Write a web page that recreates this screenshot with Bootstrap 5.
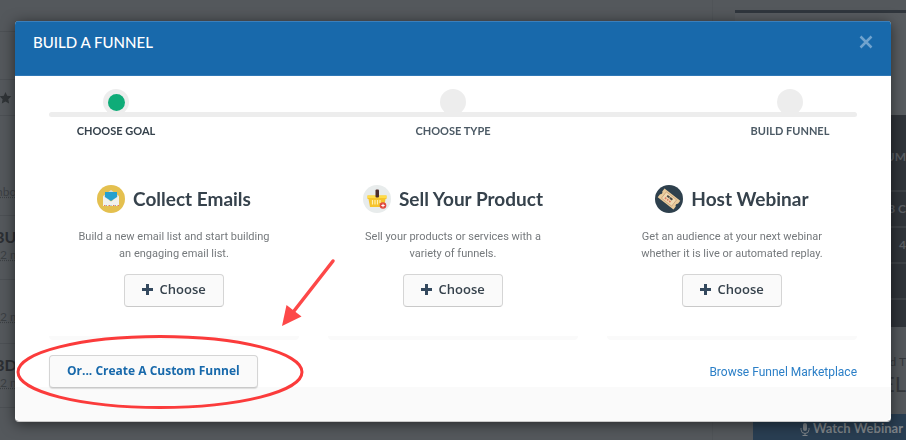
<!DOCTYPE html>
<html lang="en">
<head>
<meta charset="utf-8">
<meta name="viewport" content="width=device-width, initial-scale=1">
<title>Build a Funnel</title>
<link href="https://cdn.jsdelivr.net/npm/bootstrap@5.3.0/dist/css/bootstrap.min.css" rel="stylesheet">
<style>
body { font-family: Lato, "Open Sans", sans-serif; background: #54585c; color: #36393d; overflow: hidden; }
.backdrop-page { height: 100vh; overflow: hidden; }
.feed { border-right: 1px solid #505458; }
.feed-row { border-bottom: 1px solid #4c5054; height: 64px; padding-top: 12px; font-size: 12px; line-height: 18px; white-space: nowrap; color: #3c4044; }
.feed-row strong { font-size: 16px; color: #2c2f33; display: block; margin-left: -6px; }
.feed-row span { text-decoration: underline dotted; }
.feed-top { height: 32px; }
.feed-tool { height: 32px; padding-top: 0; }
.feed-star { height: 36px; }
.feed-label { height: 100px; padding-top: 67px; }
.feed-label span { margin-left: -4px; }
.aside-col { width: 171px; padding-top: 10px; margin-left: 22px; }
.aside-card { border-top: 3px solid #30363d; background: #585c60; height: 105px; }
.stat { background: #30343a; color: #595d62; border-bottom: 2px solid #3d4146; height: 36px; line-height: 34px; font-size: 12px; font-weight: 700; text-align: right; white-space: nowrap; }
.stat-head { height: 77px; line-height: 84px; }
.stat-last { height: 27px; border: 0; }
.trial { height: 86px; margin-top: 1px; color: #36393d; font-size: 12px; text-align: right; padding-top: 24px; line-height: 20px; }
.trial b { font-size: 22px; font-weight: 400; display: block; line-height: 24px; }
.btn-watch { --bs-btn-color: #7d8388; --bs-btn-bg: #293e52; --bs-btn-border-color: #293e52; --bs-btn-hover-bg: #293e52; width: 153px; margin-left: 18px; height: 36px; padding: 0 2px 8px; font-size: 13px; line-height: 22px; font-weight: 700; text-align: right; white-space: nowrap; }

.modal-dialog { max-width: none; margin: 21px 15px; }
.modal-content { border: 0; border-radius: 4px; overflow: hidden; box-shadow: 0 2px 14px rgba(0,0,0,.55); border-bottom: 1px solid #c9c9c9; color: #36424c; }
.modal-header { background: #1869ab; border: 0; border-top: 1px solid #3b7fbb; border-bottom: 1px solid #2f78b6; border-radius: 0; padding: 10px 18px 23px; }
.modal-title { color: #fff; font-size: 15px; line-height: 20px; font-weight: 500; }
.close-x { color: #70a3ce; line-height: 0; }
.modal-body { padding: 13px 34px 0; }
.step-row { font-size: 11px; line-height: 14px; font-weight: 700; color: #4c5a65; padding-top: 7px; }
.step { width: 134px; }
.step-current { color: #36424c; }
.step-dot { width: 26px; height: 26px; border-radius: 50%; background: #ededed; padding: 5px; }
.step-dot i { display: block; width: 17px; height: 17px; border-radius: 50%; background: #0fac78; }
.step-line { height: 5px; margin-top: -3px; border-radius: 3px; background: #ededed; position: relative; }
.goal-row { --bs-gutter-x: 29px; padding-top: 47px; }
.goal { padding-bottom: 29px; border-bottom: 4px solid #fafafa; border-radius: 4px; }
.goal h2 { font-size: 19px; line-height: 28px; font-weight: 700; gap: 8px; margin: 0 0 15px; }
.goal p { font-family: Roboto, sans-serif; font-size: 11px; line-height: 17px; color: #75797c; margin: 0 0 12px; }
.btn-goal { --bs-btn-color: #36424c; --bs-btn-bg: #fafafa; --bs-btn-border-color: #d5d5d5; --bs-btn-hover-bg: #f1f1f1; --bs-btn-hover-color: #36424c; --bs-btn-border-radius: 4px; border-bottom-color: #c9c9c9; font-family: "Open Sans", sans-serif; font-weight: 600; font-size: 13px; line-height: 19px; padding: 5px 17px 7px; height: 33px; }
.btn-goal svg { margin: 0 3px 2px 0; }
.btn-custom { --bs-btn-color: #1869ab; --bs-btn-hover-color: #1869ab; font-size: 12px; font-weight: 700; box-shadow: 0 1px 1px rgba(0,0,0,.12); }
.action-row { padding-top: 15px; }
.market { color: #2b7fc7; font-family: Roboto, sans-serif; font-size: 12px; text-decoration: none; }
.modal-footer { background: #fafafa; border: 0; height: 34px; margin-top: -1px; }
.marks { position: absolute; left: 0; top: 0; z-index: 1060; pointer-events: none; }
</style>
<script src="https://cdn.jsdelivr.net/npm/bootstrap@5.3.0/dist/js/bootstrap.bundle.min.js"></script>
</head>
<body>
<div class="backdrop-page d-flex" aria-hidden="true">
  <div class="feed flex-grow-1">
    <div class="feed-row feed-top p-0"></div>
    <div class="feed-row feed-tool mt-3"></div>
    <div class="feed-row feed-star p-0 d-flex align-items-center">
      <svg width="12" height="12" viewBox="0 0 12 12"><path fill="#303437" d="M5.500 0.000l1.700 3.800 4.100.5-3 2.900.8 4.200-3.600-2-3.700 2 .8-4.200-3-2.900 4.200-.5z"/></svg>
    </div>
    <div class="feed-row feed-label"><span>nbox</span></div>
    <div class="feed-row"><strong>BU</strong><span>2 m</span></div>
    <div class="feed-row pt-4"><span class="d-block pt-1">2 m</span></div>
    <div class="feed-row"><strong>BD</strong><span>2 m</span></div>
  </div>
  <div class="aside-col flex-shrink-0">
    <div class="aside-card"></div>
    <div class="stat stat-head">UM</div>
    <div class="stat">3 C</div>
    <div class="stat">4</div>
    <div class="stat"></div>
    <div class="stat stat-last"></div>
    <div class="trial">d T<b>EL</b></div>
    <button type="button" class="btn btn-watch rounded-0" tabindex="-1">
      <svg width="10" height="13" viewBox="0 0 10 13" fill="none" stroke="#7d8388"><rect x="3" y="0" width="4" height="8" rx="2" fill="#7d8388" stroke="none"/><path d="M1 5v1.500a4 4 0 0 0 8 0V5M5 10.500V12.500M2.500 12.500h5"/></svg>
      Watch Webinar
    </button>
  </div>
</div>

<div class="modal d-block" role="dialog" aria-labelledby="funnelTitle">
  <div class="modal-dialog">
    <div class="modal-content">
      <div class="modal-header">
        <h1 class="modal-title" id="funnelTitle">BUILD A FUNNEL</h1>
        <button type="button" class="btn p-0 border-0 close-x" aria-label="Close">
          <svg width="14" height="14" viewBox="0 0 14 14" stroke="currentColor" stroke-width="2.500"><path d="M1.500 1.500l11 11M12.500 1.500l-11 11"/></svg>
        </button>
      </div>
      <div class="modal-body">
        <div class="d-flex justify-content-between">
          <div class="step"><div class="step-dot mx-auto"><i></i></div></div>
          <div class="step"><div class="step-dot mx-auto"></div></div>
          <div class="step"><div class="step-dot mx-auto"></div></div>
        </div>
        <div class="step-line"></div>
        <div class="step-row d-flex justify-content-between text-center">
          <div class="step step-current">CHOOSE GOAL</div>
          <div class="step">CHOOSE TYPE</div>
          <div class="step">BUILD FUNNEL</div>
        </div>
        <div class="row goal-row text-center">
          <div class="col-4"><section class="goal">
            <h2 class="d-flex justify-content-center">
              <svg width="28" height="28" viewBox="0 0 28 28"><circle cx="14" cy="14" r="14" fill="#e4c04f"/><path fill="#d8dcda" d="M6 11L14 5l8 6v4H6z"/><path fill="#f1f1ec" d="M6 11l8 5.500L22 11v10H6z"/><path fill="#25a0ce" d="M8 7h12v5l-6 4-6-4z"/><path stroke="#e67a61" stroke-dasharray="1.500 3" d="M7 20.500h15"/><path stroke="#8babb5" stroke-dasharray="1 3.500" d="M9 20.500h13"/></svg>
              Collect Emails</h2>
            <p>Build a new email list and start building<br>an engaging email list.</p>
            <button type="button" class="btn btn-goal"><svg width="11" height="11" viewBox="0 0 11 11"><path stroke="#34495e" stroke-width="3" d="M5.500 0v11M0 5.500h11"/></svg> Choose</button>
          </section></div>
          <div class="col-4"><section class="goal">
            <h2 class="d-flex justify-content-center">
              <svg width="28" height="28" viewBox="0 0 28 28"><circle cx="14" cy="14" r="14" fill="#e8ecec"/><path fill="#f6c42c" d="M4.500 10.500h19V14h-1l-1.500 8H7L5.500 14h-1z"/><path fill="#ffdc49" d="M4.500 10.500h19V13h-19z"/><path stroke="#fff0b0" stroke-width="1.200" d="M9.500 15v4.500M12 15v4.500M14.500 15v4.500M17 15v3"/><rect x="12.500" y="4.500" width="3.500" height="8" rx="1" fill="#4c2c2b"/><circle cx="20" cy="20.500" r="3.300" fill="#e0493e"/><path stroke="#fff" d="M20 18.800v3.400M18.300 20.500h3.400"/></svg>
              Sell Your Product</h2>
            <p>Sell your products or services with a<br>variety of funnels.</p>
            <button type="button" class="btn btn-goal"><svg width="11" height="11" viewBox="0 0 11 11"><path stroke="#34495e" stroke-width="3" d="M5.500 0v11M0 5.500h11"/></svg> Choose</button>
          </section></div>
          <div class="col-4"><section class="goal">
            <h2 class="d-flex justify-content-center">
              <svg width="28" height="28" viewBox="0 0 28 28"><circle cx="14" cy="14" r="14" fill="#2e404d"/><g transform="rotate(38 14 14)"><path fill="#eacb9b" d="M4 8.500h20v3.700a2 2 0 0 0 0 3.600v3.700H4v-3.700a2 2 0 0 0 0-3.600z"/><path fill="#f0d9b0" stroke="#c9a27d" stroke-width=".8" d="M7.500 10h13v8h-13z"/><path stroke="#4b4b48" stroke-width="2" stroke-dasharray="3 .6" d="M10.500 12.500h7"/><path stroke="#dd7963" stroke-width="1.700" stroke-dasharray="1.700 1" d="M10 15.500h8"/></g></svg>
              Host Webinar</h2>
            <p>Get an audience at your next webinar<br>whether it is live or automated replay.</p>
            <button type="button" class="btn btn-goal"><svg width="11" height="11" viewBox="0 0 11 11"><path stroke="#34495e" stroke-width="3" d="M5.500 0v11M0 5.500h11"/></svg> Choose</button>
          </section></div>
        </div>
        <div class="action-row d-flex justify-content-between align-items-center">
          <button type="button" class="btn btn-goal btn-custom">Or... Create A Custom Funnel</button>
          <a class="market" href="#marketplace">Browse Funnel Marketplace</a>
        </div>
      </div>
      <div class="modal-footer"></div>
    </div>
  </div>
</div>
<svg class="marks" width="350" height="420" viewBox="0 0 350 420" aria-hidden="true">
  <ellipse cx="160" cy="372" rx="142" ry="35.500" fill="none" stroke="#fb3b3b" stroke-width="3"/>
  <path stroke="#fd4848" stroke-width="3.500" stroke-linecap="round" d="M333 261L294 311"/>
  <path fill="#fd4848" d="M282 326l4.500-21 15 11.500z"/>
</svg>
</body>
</html>
